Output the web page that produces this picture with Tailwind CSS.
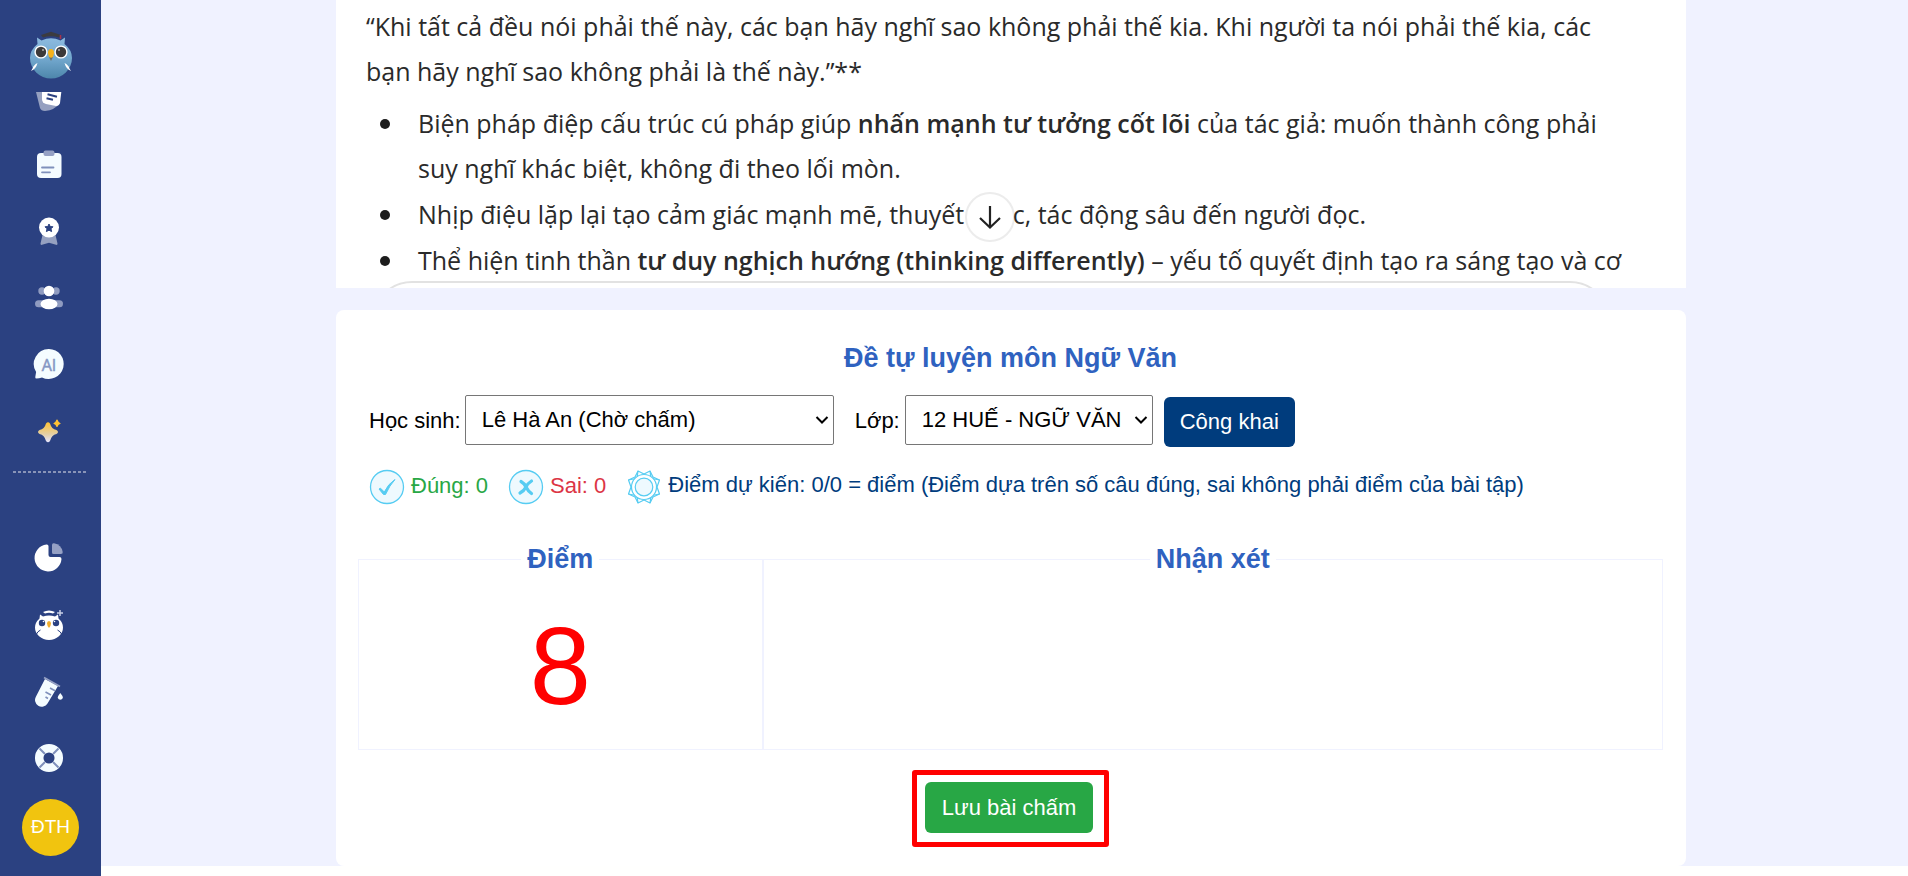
<!DOCTYPE html>
<html lang="vi">
<head>
<meta charset="utf-8">
<meta name="viewport" content="width=device-width, initial-scale=1">
<title>Chấm bài tự luyện</title>
<script src="https://cdn.jsdelivr.net/npm/@tailwindcss/browser@4"></script>
</head>
<body class="flex min-h-screen items-start bg-[#fffffe] font-['Liberation_Sans',Arial,sans-serif] text-[22px] text-black">

<!-- Sidebar -->
<aside class="sticky top-0 flex h-screen w-[101px] shrink-0 flex-col bg-[#2b4181]">
  <a href="#" aria-label="Trang chủ" class="flex h-[92px] shrink-0 justify-center pt-[31px]">
    <svg width="44" height="48" viewBox="0 0 44 48">
      <defs><linearGradient id="owl" x1="0" y1="0" x2="0" y2="1"><stop offset="0" stop-color="#8dbbe0"/><stop offset=".5" stop-color="#74a9cf"/><stop offset="1" stop-color="#4d86ab"/></linearGradient></defs>
      <path d="M8 6.500l4.500 3q9.500-4.500 19 0l4.500-3-.500 6.500q7.500 6 7.500 14a21 20.500 0 0 1-42 0q0-8 7.500-14z" fill="url(#owl)"/>
      <path d="M12 4L22 .800 32 4l-2 2.500Q22 4 14 6.500z" fill="#3b3b40"/>
      <path d="M31.500 4v4" stroke="#a8324a" stroke-width="1.500"/>
      <circle cx="12" cy="21" r="6.600" fill="#fff"/><circle cx="32" cy="21" r="6.600" fill="#fff"/>
      <circle cx="12" cy="21" r="5.200" fill="#3c3a3a"/><circle cx="32" cy="21" r="5.200" fill="#3c3a3a"/>
      <circle cx="14" cy="19" r=".800" fill="#fff"/><circle cx="30" cy="19" r=".800" fill="#fff"/>
      <path d="M22 18q3 0 3 4 0 3-3 7-3-4-3-7 0-4 3-4z" fill="#f6b21b"/><path d="M20 26q2 1.500 4 0l-2 4z" fill="#6b6f6a"/>
      <path d="M2 40q5-2 6.500-8-4 2-5 5.500zM42 40q-5-2-6.500-8 4 2 5 5.500z" fill="#fff"/>
    </svg>
  </a>
  <nav aria-label="Chính" class="overflow-hidden pr-[3px]">
    <a href="#" aria-label="Khóa học" class="-mt-7 flex h-[67px] items-center justify-center">
      <svg width="32" height="32" viewBox="0 0 32 32"><path d="M2 6h11l14 15q-5 7-15 8-4 0-5-3z" fill="#95a0c0"/><path d="M9 4h20l-2 17q-1 3-4 3l-10-2q-4-1-4-5z" fill="#fff"/><path d="M15.500 12.500l7.500 2M14.500 16.500l4.500 1" stroke="#2b4181" stroke-width="2" stroke-linecap="square"/></svg>
    </a>
    <a href="#" aria-label="Bài tập" class="flex h-[67px] items-center justify-center">
      <svg width="32" height="32" viewBox="0 0 32 32"><rect x="4" y="4" width="24.500" height="25" rx="4" fill="#f4fbff"/><rect x="10.500" y="1.500" width="11" height="5.500" rx="2" fill="#95a0c4"/><path d="M9 18.500h11.500M9 23.300h8" stroke="#7f90bb" stroke-width="1.800" stroke-linecap="round"/></svg>
    </a>
    <a href="#" aria-label="Thành tích" class="flex h-[67px] items-center justify-center">
      <svg width="32" height="32" viewBox="0 0 32 32"><path d="M9.500 19h13l2 8.500q.200 1.700-1.500 1.300l-7-2-7 2q-1.700.400-1.500-1.300z" fill="#95a0c0"/><circle cx="16" cy="11.500" r="10" fill="#fff"/><path d="M16 8l1.200 2.500 2.800.300-2 2 .600 2.800-2.600-1.400-2.600 1.400.600-2.800-2-2 2.800-.300z" fill="#2b4181" stroke="#2b4181" stroke-width="1" stroke-linejoin="round"/></svg>
    </a>
    <a href="#" aria-label="Lớp học" class="flex h-[67px] items-center justify-center">
      <svg width="32" height="32" viewBox="0 0 32 32"><g fill="#8f9bc0"><circle cx="9" cy="8" r="3.700"/><circle cx="23" cy="8" r="3.700"/><rect x="2" y="17.300" width="28" height="7" rx="3.500"/></g><circle cx="16" cy="8" r="5.300" fill="#fff"/><ellipse cx="16" cy="21" rx="8.500" ry="5.300" fill="#fff"/></svg>
    </a>
    <a href="#" aria-label="Trợ lý AI" class="flex h-[67px] items-center justify-center">
      <svg width="32" height="32" viewBox="0 -1 32 32" overflow="visible"><path d="M16-2a15 15 0 1 1-7 28.400q-3 .900-5.500 1.200-1.500 0-1.200-1.600l.800-5A15 15 0 0 1 16-2z" fill="#f4fcff"/><text x="16" y="19.500" text-anchor="middle" font-family="Open Sans, sans-serif" font-size="16" fill="#8497c4" stroke="#8497c4" stroke-width=".500">AI</text></svg>
    </a>
    <a href="#" aria-label="Nâng cấp" class="flex h-[67px] items-center justify-center">
      <svg width="32" height="32" viewBox="0 0 32 32"><defs><linearGradient id="sp" x1="0" y1="0" x2="0" y2="1"><stop offset="0" stop-color="#ffc233"/><stop offset=".600" stop-color="#e3cfa6"/><stop offset="1" stop-color="#e4e4ff"/></linearGradient></defs><path d="M13 6.500q2-2.500 4 0 1.500 5.500 6.500 6.500 3 2 0 4-5 1-6.500 7-2 2.500-4 0-1.500-6-6.500-7-3-2 0-4 5-1 6.500-6.500z" fill="url(#sp)"/><path d="M24 3q1 3 3 3.500-2 .500-3 3-1-2.500-3-3 2-.500 3-3.500z" fill="#ffc233" stroke="#ffc233" stroke-linejoin="round" stroke-width="1.200"/></svg>
    </a>
  </nav>
  <div class="flex h-[59px] shrink-0 justify-center pt-[5px]"><svg width="75" height="2" viewBox="0 0 75 2"><path d="M0 1h75" stroke="#e8e8ee" stroke-width="1" stroke-dasharray="3 2"/></svg></div>
  <nav aria-label="Công cụ" class="shrink-0 pr-[3px]">
    <a href="#" aria-label="Thống kê" class="flex h-[66px] items-center justify-center">
      <svg width="32" height="32" viewBox="0 0 32 32"><path d="M13.500 2.500q2-.200 2 1.800V13q0 2 2 2h9q2 0 2 2A13.500 13.500 0 1 1 13.500 2.500z" fill="#fff"/><path d="M19 3q0-2 2-1.700 7.500 1.500 8.700 8.700.300 2-1.700 2h-7.500q-1.500 0-1.500-1.500z" fill="#95a0c4"/></svg>
    </a>
    <a href="#" aria-label="Cú mèo AI" class="flex h-[67px] items-center justify-center">
      <svg width="32" height="32" viewBox="0 0 32 32"><path d="M7 5.500l3 2q6-2 12 0l3-2 .500 4q4.500 4 4.500 9a14 12.500 0 0 1-28 0q0-5 4.500-9z" fill="#fff"/><path d="M10 3q6-3 12 0l-2 1.500q-4-1.500-8 0z" fill="#fff"/><circle cx="9" cy="14" r="3.200" fill="#2b4181"/><circle cx="23" cy="14" r="3.200" fill="#2b4181"/><circle cx="10.500" cy="12.500" r=".800" fill="#fff"/><circle cx="21.500" cy="12.500" r=".800" fill="#fff"/><path d="M16 12q2 0 2 2.500 0 2-2 4.500-2-2.500-2-4.500 0-2.500 2-2.500z" fill="#f2ae2e"/><path d="M3.500 25q1-2.500 4-4M28.500 25q-1-2.500-4-4" stroke="#2b4181" stroke-width="1" fill="none"/><path d="M27 1v6M24 4h6" stroke="#c9d0e6" stroke-width="1.500"/></svg>
    </a>
    <a href="#" aria-label="Thí nghiệm" class="flex h-[67px] items-center justify-center">
      <svg width="32" height="32" viewBox="0 0 32 32"><path d="M12 3l13 7-10.500 17.500a6.700 6.700 0 0 1-11.500-7z" fill="#f4fcff"/><path d="M11 1.500l16 9" stroke="#95a0c4" stroke-width="1.800"/><path d="M17 12l5 2.800M12.500 16l5.500 3M12.500 21l2.500 1.500" stroke="#7f90bb" stroke-width="1.600"/><path d="M27.300 17q3 3.500 2.500 5a2.700 2.700 0 0 1-5 0q-.500-1.500 2.500-5z" fill="#f4fcff"/></svg>
    </a>
    <a href="#" aria-label="Trợ giúp" class="flex h-[66px] items-center justify-center">
      <svg width="32" height="32" viewBox="0 0 32 32"><circle cx="16" cy="16" r="9.800" fill="none" stroke="#f4fcff" stroke-width="8.500"/><path d="M6.500 6.500l5.500 5.500M25.500 6.500l-5.500 5.500M6.500 25.500l5.500-5.500M25.500 25.500l-5.500-5.500" stroke="#7f90bb" stroke-width="2"/></svg>
    </a>
  </nav>
  <button type="button" class="mt-2 flex h-[57px] w-[57px] shrink-0 items-center justify-center self-center rounded-full bg-[#f1c40f] text-[19px] text-white">ĐTH</button>
</aside>

<main class="min-w-0 flex-1 bg-[#f0f2ff] pl-[13px]">
  <div class="mx-auto flex max-w-[1350px] flex-col gap-[22px]">

    <!-- Student's work -->
    <section class="relative h-[288px] overflow-hidden bg-white pl-[30px] pr-[60px] font-['Open_Sans','Noto_Sans',sans-serif] text-[25px] leading-[45px] text-[#2a2a2a]">
      <p class="pt-[4px]">“Khi tất cả đều nói phải thế này, các bạn hãy nghĩ sao không phải thế kia. Khi người ta nói phải thế kia, các<br>bạn hãy nghĩ sao không phải là thế này.”**</p>
      <ul class="mt-[7px] flex flex-col gap-px whitespace-nowrap">
        <li class="flex before:ml-[14px] before:mt-[18px] before:mr-[28px] before:h-[10px] before:w-[10px] before:shrink-0 before:rounded-full before:bg-[#1c1c1c]"><div>Biện pháp điệp cấu trúc cú pháp giúp <b class="font-semibold">nhấn mạnh tư tưởng cốt lõi</b> của tác giả: muốn thành công phải<br>suy nghĩ khác biệt, không đi theo lối mòn.</div></li>
        <li class="flex before:ml-[14px] before:mt-[18px] before:mr-[28px] before:h-[10px] before:w-[10px] before:shrink-0 before:rounded-full before:bg-[#1c1c1c]"><div>Nhịp điệu lặp lại tạo cảm giác mạnh mẽ, thuyết <button type="button" aria-label="Cuộn xuống" class="-my-3 -ml-1.5 -mr-0.5 inline-flex h-[50px] w-[50px] items-center justify-center rounded-full border-2 border-[#ececec] bg-white align-middle"><svg width="24" height="26" viewBox="0 0 24 26" fill="none" stroke="#222" stroke-width="2.200"><path d="M12 2v21M2 14l10 9.500L22 14"/></svg></button>c, tác động sâu đến người đọc.</div></li>
        <li class="flex before:ml-[14px] before:mt-[18px] before:mr-[28px] before:h-[10px] before:w-[10px] before:shrink-0 before:rounded-full before:bg-[#1c1c1c]"><div>Thể hiện tinh thần <b class="font-semibold">tư duy nghịch hướng (thinking differently)</b> – yếu tố quyết định tạo ra sáng tạo và cơ</div></li>
      </ul>
      <div class="absolute left-9 right-[76px] top-[281px] h-24 rounded-[40px] border-2 border-[#e2e2e2] bg-white"></div>
    </section>

    <!-- Grading panel -->
    <section class="rounded-lg bg-white pb-[19px] pl-[22px] pr-[23px] pt-[27px]">
      <h2 class="text-center text-[27px] font-bold leading-[42px] text-[#2f62c0]">Đề tự luyện môn Ngữ Văn</h2>

      <div class="mt-[14px] flex items-center px-[11px]">
        <label for="student" class="pt-px">Học sinh:</label>
        <div class="relative ml-1 w-[369px]">
          <select id="student" class="h-[50px] w-full appearance-none rounded-[2px] border border-[#767676] bg-white pb-0.5 pl-4 pr-7"><option>Lê Hà An (Chờ chấm)</option></select>
          <svg class="pointer-events-none absolute inset-y-0 right-[5px] my-auto" width="14" height="10" viewBox="0 0 14 10" fill="none" stroke="#000" stroke-width="2"><path d="M1.500 2L7 7.500 12.500 2"/></svg>
        </div>
        <label for="class" class="ml-[21px] pt-px">Lớp:</label>
        <div class="relative ml-[5px] w-[248px]">
          <select id="class" class="h-[50px] w-full appearance-none rounded-[2px] border border-[#767676] bg-white pb-0.5 pl-4 pr-7"><option>12 HUẾ - NGỮ VĂN</option></select>
          <svg class="pointer-events-none absolute inset-y-0 right-[5px] my-auto" width="14" height="10" viewBox="0 0 14 10" fill="none" stroke="#000" stroke-width="2"><path d="M1.500 2L7 7.500 12.500 2"/></svg>
        </div>
        <button type="button" class="ml-[11px] mt-1 h-[50px] rounded-md bg-[#003c7d] px-4 pb-0.5 text-white">Công khai</button>
      </div>

      <div class="mt-[21px] flex items-center px-[11px]">
        <svg width="36" height="36" viewBox="0 0 36 36"><circle cx="18" cy="18" r="16.500" fill="#eef9fe" stroke="#56ccf2" stroke-width="1.300"/><path d="M10 20l1.500-.800 3.800 3.800Q19 15 26 10.500q-5.500 6-9.500 15h-2z" fill="#56ccf2" stroke="#56ccf2" stroke-linejoin="round"/></svg>
        <span class="ml-1.5 pb-[3px] text-[#28a745]">Đúng: 0</span>
        <svg class="ml-5" width="36" height="36" viewBox="0 0 36 36"><circle cx="18" cy="18" r="16.500" fill="#eef9fe" stroke="#56ccf2" stroke-width="1.300"/><path d="M13 12.500q3.500 2 5 5.500 2 4 5.500 6.500M23.500 12q-4 2.500-5.500 6-2 4-6 6" fill="none" stroke="#56ccf2" stroke-width="3.200" stroke-linecap="round"/></svg>
        <span class="ml-1.5 pb-[3px] text-[#dc3545]">Sai: 0</span>
        <svg class="ml-5" width="36" height="36" viewBox="0 0 36 36" fill="none" stroke="#56ccf2" stroke-width="1.200" stroke-linejoin="round">
          <path d="M12 2L18 5 24 2 27 8 33.500 11 31 18 33.500 25 27 28 24 34 18 31 12 34 9 28 2.500 25 5 18 2.500 11 9 8z"/>
          <path d="M12 2l-1 7M24 2l1 7M33.500 11L26 9.500M33.500 25L26 26.500M24 34l1-7M12 34l-1-7M2.500 25l7.500 1.500M2.500 11L10 9.500"/>
          <circle cx="18" cy="18" r="12.500" fill="#fff"/><circle cx="18" cy="18" r="8.800" fill="#eef9fe"/>
        </svg>
        <span class="ml-1.5 pb-[5px] text-[#003c7d]">Điểm dự kiến: 0/0 = điểm (Điểm dựa trên số câu đúng, sai không phải điểm của bài tập)</span>
      </div>

      <div class="mt-8 flex">
        <fieldset class="h-[212px] w-[31%] border border-[#f0f2ff] text-center">
          <legend class="mx-auto px-1.5 text-[27px] font-bold leading-[42px] text-[#2f62c0]">Điểm</legend>
          <output class="block pt-6 text-[110px] leading-[124px] text-[#f00]">8</output>
        </fieldset>
        <fieldset class="h-[212px] flex-1 border border-[#f0f2ff]">
          <legend class="mx-auto px-1.5 text-[27px] font-bold leading-[42px] text-[#2f62c0]">Nhận xét</legend>
        </fieldset>
      </div>

      <div class="mt-5 flex justify-center">
        <div class="rounded-[3px] border-[5px] border-[#f00] pb-[9px] pl-2 pr-[11px] pt-[7px]">
          <button type="button" class="h-[51px] rounded-md bg-[#28a745] px-[17px] text-white">Lưu bài chấm</button>
        </div>
      </div>
    </section>
  </div>
</main>
</body>
</html>
